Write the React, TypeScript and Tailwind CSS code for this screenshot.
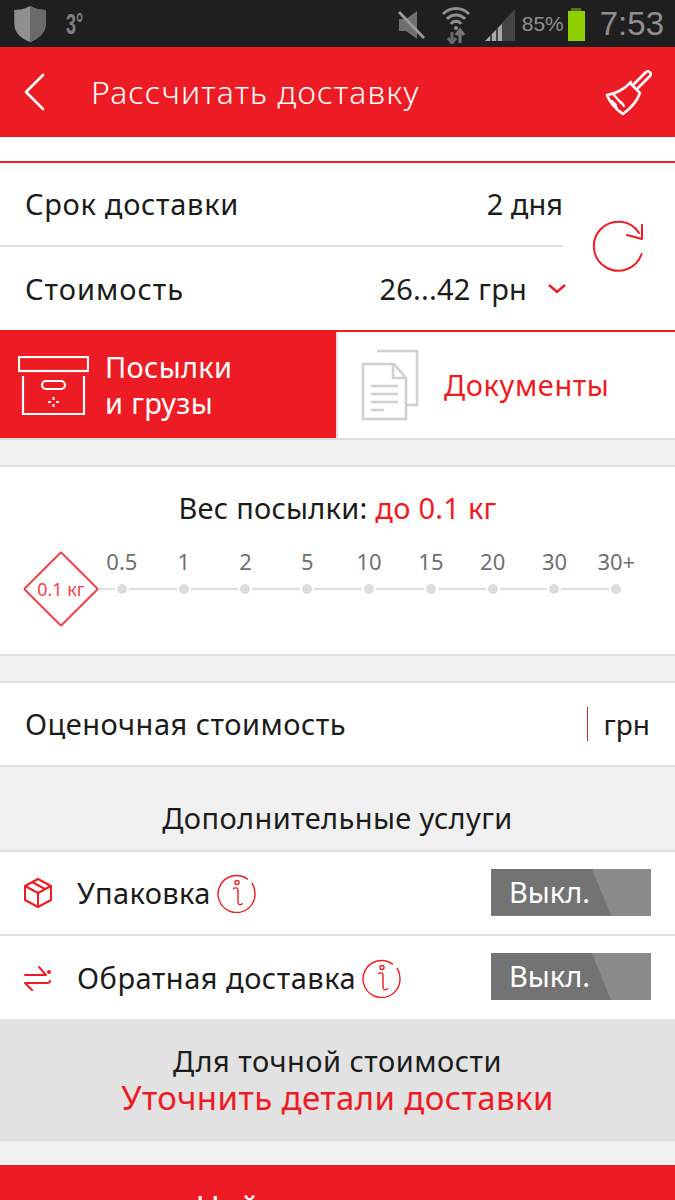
import React from "react";

const FONT = "font-['Noto_Sans','Open_Sans',sans-serif]";

function StatusBar() {
  return (
    <div className="flex h-[47px] shrink-0 items-center bg-[#1f1f1f] pl-[13px] pr-[11px] text-[#8a8a8a]">
      <svg width="34" height="38" viewBox="0 0 27 38" preserveAspectRatio="none" className="mt-[1px]">
        <path d="M13.5 1 C9 4 5 5 1 5 L1 19 C1 28 7 34 13.5 37 C20 34 26 28 26 19 L26 5 C22 5 18 4 13.5 1Z" fill="#8f8f8f" />
        <path d="M13.5 1 C18 4 22 5 26 5 L26 19 C26 28 20 34 13.5 37Z" fill="#6a6a6a" />
      </svg>
      <span className="ml-[19px] mt-[1px] origin-left font-['Liberation_Sans',sans-serif] text-[29px] leading-none font-bold text-[#808080] [transform:scaleX(0.62)]">3°</span>
      <div className="ml-auto flex items-center">
        <svg width="28" height="32" viewBox="0 0 28 32" className="mt-[2px]">
          <path d="M2 10h7l11-8v28l-11-8H2z" fill="#6f6f6f" />
          <path d="M2 3l25 26" stroke="#9a9a9a" strokeWidth="3" />
        </svg>
        <svg width="30" height="38" viewBox="0 0 30 38" className="ml-[16px] mt-[3px]">
          <path d="M2 8a18 18 0 0 1 26 0M6 13a12 12 0 0 1 18 0M10 18a6 6 0 0 1 10 0" fill="none" stroke="#8f8f8f" strokeWidth="3" />
          <circle cx="15" cy="22" r="2" fill="#8f8f8f" />
          <path d="M11 26v11M7 32l4 5 4-5" fill="none" stroke="#666" strokeWidth="3" />
          <path d="M19 37V25M15 29l4-5 4 5" fill="none" stroke="#777" strokeWidth="3" />
        </svg>
        <svg width="31" height="34" viewBox="0 0 31 34" className="ml-[14px] mt-[3px]">
          <path d="M0 33 L30 1 V33Z" fill="#444" />
          <path d="M0 33 L5 28 V33ZM7 33V26L11 22V33ZM13 33V20L17 16V33Z" fill="#a8a8a8" />
        </svg>
        <span className="ml-[6px] font-['Liberation_Sans',sans-serif] text-[21px] leading-none text-[#8f8f8f]">85%</span>
        <div className="ml-[4px] mt-[1px] flex flex-col items-center">
          <div className="h-[3px] w-[10px] bg-[#5a6a2a]" />
          <div className="h-[30px] w-[17px] bg-[#8fce00]" />
        </div>
        <span className="ml-[15px] font-['Liberation_Sans',sans-serif] text-[33px] leading-none text-[#8f8f8f]">7:53</span>
      </div>
    </div>
  );
}

function InfoIcon({ className }: { className?: string }) {
  return (
    <svg width="40" height="40" viewBox="0 0 40 40" fill="none" stroke="#ed1c24" strokeWidth="1.4" className={className}>
      <path d="M31 6.500A18.500 18.500 0 1 0 38 20a18.500 18.500 0 0 0-3-10" />
      <circle cx="20" cy="9.500" r="2" />
      <path d="M16 15.500c3-1 5-1 5 1.500v12c0 3 2 3.500 5 1.500" />
    </svg>
  );
}

function Toggle() {
  return (
    <div className="relative h-[47px] w-[160px] overflow-hidden bg-[#8a8a8a]">
      <div className="absolute inset-y-0 left-0 w-[120px] bg-[#737373] [clip-path:polygon(0_0,84%_0,100%_100%,0_100%)]" />
      <span className={`absolute left-[18px] top-[3px] ${FONT} text-[29px] leading-[40px] text-white`}>Выкл.</span>
    </div>
  );
}

const WEIGHTS = ["0.5", "1", "2", "5", "10", "15", "20", "30", "30+"];

export default function App() {
  return (
    <div className={`flex h-[1200px] flex-col overflow-hidden bg-[#f0f0f0] ${FONT} text-[#1c1c1c]`}>
      <StatusBar />

      <header className="flex h-[90px] shrink-0 items-center bg-[#ed1c24] pl-[23px] pr-[22px] text-white">
        <svg width="22" height="38" viewBox="0 0 22 38" fill="none" stroke="white" strokeWidth="2.6" strokeLinecap="round" strokeLinejoin="round">
          <path d="M20 2 3 19l17 17" />
        </svg>
        <h1 className="ml-[46px] text-[32px] font-light tracking-[1.15px]">Рассчитать доставку</h1>
        <svg width="48" height="48" viewBox="0 0 48 48" fill="none" stroke="white" strokeWidth="2.6" strokeLinejoin="round" strokeLinecap="round" className="ml-auto">
          <path d="M29 16 41 4c3-2 6 1 4 4L33 20" />
          <path d="M25 15 34 24" />
          <path d="M26 14C20 21 10 26 2 27c2 6 9 15 16 19 7-5 14-13 17-21" />
          <path d="M9 27l7 8M7 33l4 4M12 40l-3-3M19 38l-3-4" strokeWidth="2.2" />
        </svg>
      </header>

      <div className="h-[24px] shrink-0 bg-white" />

      <section className="relative shrink-0 border-t-2 border-[#ed1c24] bg-white">
        <div className="mr-[112px] flex h-[84px] items-center justify-between border-b-2 border-[#e0e0e0] pl-[25px] text-[29px]">
          <span className="tracking-[0.7px]">Срок доставки</span>
          <span>2 дня</span>
        </div>
        <div className="mr-[112px] flex h-[83px] items-center justify-between pl-[25px] text-[29px]">
          <span className="tracking-[1px]">Стоимость</span>
          <div className="flex items-center">
            <span className="tracking-[0.2px]">26...42 грн</span>
            <svg width="20" height="12" viewBox="0 0 20 12" fill="none" stroke="#ed1c24" strokeWidth="2.4" className="ml-[20px] mr-[-4px]">
              <path d="M2 2l8 7 8-7" />
            </svg>
          </div>
        </div>
        <svg width="54" height="54" viewBox="0 0 54 54" fill="none" stroke="#ed1c24" strokeWidth="2" strokeLinecap="round" strokeLinejoin="round" className="absolute left-[591px] top-[57px]">
          <path d="M50.600 34A24.500 24.500 0 1 1 48 13" />
          <path d="M51 5v14l-15-4" />
        </svg>
      </section>

      <section className="flex h-[110px] shrink-0 border-y-2 border-t-[#ed1c24] border-b-[#dcdcdc] bg-white">
        <div className="flex w-[336px] items-center bg-[#ed1c24] pl-[18px] text-white">
          <svg width="71" height="60" viewBox="0 0 71 60" fill="none" stroke="white" strokeWidth="2.2" className="mt-[2px]">
            <rect x="1" y="1" width="69" height="14" />
            <path d="M5 20v38h61V20" />
            <rect x="24" y="25" width="23" height="8" rx="4" />
            <path d="M35.500 41v3M35.500 48v3M30 46h3M38 46h3" strokeWidth="2" />
          </svg>
          <div className="ml-[16px] text-[29px] leading-[36px] tracking-[0.3px]">
            Посылки
            <br />
            и грузы
          </div>
        </div>
        <div className="flex flex-1 items-center border-l-2 border-[#dcdcdc] pl-[23px]">
          <svg width="58" height="72" viewBox="0 0 58 72" fill="none" stroke="#d0d0d0" strokeWidth="2.6">
            <path d="M16 2h40v54H46" />
            <path d="M2 15h31l12 14v41H2z" fill="white" />
            <path d="M32 15v14h13" />
            <path d="M10 37h27M10 45h27M10 53h27M10 61h13" />
          </svg>
          <span className="ml-[25px] text-[29px] tracking-[0.6px] text-[#ed1c24]">Документы</span>
        </div>
      </section>

      <div className="h-[25px] shrink-0" />

      <section className="h-[191px] shrink-0 border-y-2 border-[#e0e0e0] bg-white">
        <div className="mt-[21px] text-center text-[29px] leading-[40px] tracking-[0.25px]">
          Вес посылки: <span className="text-[#ed1c24]">до 0.1 кг</span>
        </div>
        <div className="mt-[17px] flex pl-[23px]">
          <div className="relative z-10 mt-[6px] flex h-[76px] w-[76px] shrink-0 items-center justify-center">
            <div className="absolute left-[11px] top-[11px] h-[54px] w-[54px] rotate-45 rounded-[2px] border-2 border-[#f0444c] bg-white" />
            <span className="relative text-[18px] text-[#f0444c]">0.1 кг</span>
          </div>
          <div className="ml-[-8px] flex flex-col">
            <div className="flex h-[32px]">
              {WEIGHTS.map((w) => (
                <span key={w} className="w-[61.8px] text-center text-[22px] leading-[32px] text-[#707070]">
                  {w}
                </span>
              ))}
            </div>
            <div className="relative mt-[7px] flex h-[10px] items-center">
              <div className="absolute left-0 right-[30px] top-[4px] h-[2px] bg-[#dedede]" />
              {WEIGHTS.map((w) => (
                <div key={w} className="relative flex w-[61.8px] justify-center">
                  <span className="h-[10px] w-[10px] rounded-full bg-[#dcdcdc] ring-2 ring-white" />
                </div>
              ))}
            </div>
          </div>
        </div>
      </section>

      <div className="h-[25px] shrink-0" />

      <section className="flex h-[86px] shrink-0 items-center border-y-2 border-[#e0e0e0] bg-white pl-[25px] pr-[25px] text-[29px]">
        <span className="tracking-[0.5px]">Оценочная стоимость</span>
        <span className="ml-auto h-[34px] w-px bg-[#c8323a]" />
        <span className="ml-[16px] text-[28px]">грн</span>
      </section>

      <div className="flex h-[83px] shrink-0 items-center justify-center pt-[18px] text-[29px] tracking-[0.4px]">Дополнительные услуги</div>

      <section className="shrink-0 border-t-2 border-[#e0e0e0] bg-white">
        <div className="flex h-[84px] items-center border-b-2 border-[#e0e0e0] pl-[23px] pr-[24px]">
          <svg width="30" height="32" viewBox="0 0 30 32" fill="none" stroke="#ed1c24" strokeWidth="2" strokeLinejoin="round">
            <path d="M15 2 28 9v14l-13 7-13-7V9z" />
            <path d="M2 9l13 7 13-7M15 16v14M9 5l13 7" />
          </svg>
          <span className="ml-[24px] text-[29px] tracking-[0.4px]">Упаковка</span>
          <InfoIcon className="ml-[6px]" />
          <div className="mb-[2px] ml-auto">
            <Toggle />
          </div>
        </div>
        <div className="flex h-[83px] items-center pl-[23px] pr-[24px]">
          <svg width="30" height="26" viewBox="0 0 30 26" fill="none" stroke="#ed1c24" strokeWidth="2" strokeLinecap="round" strokeLinejoin="round">
            <path d="M2 10h20M16 2l7 8" />
            <path d="M27 16c0 1-1 2-3 2H3M9 25l-7-7" />
            <circle cx="26" cy="7" r="2" fill="#ed1c24" stroke="none" />
          </svg>
          <span className="ml-[24px] text-[29px] tracking-[0.5px]">Обратная доставка</span>
          <InfoIcon className="ml-[6px]" />
          <div className="mb-[2px] ml-auto">
            <Toggle />
          </div>
        </div>
      </section>

      <section className="flex h-[122px] shrink-0 flex-col items-center border-b-2 border-[#dadada] bg-[#e2e2e2] pt-[23px]">
        <span className="text-[29px] leading-[38px] tracking-[0.5px]">Для точной стоимости</span>
        <span className="text-[33px] leading-[36px] tracking-[0.4px] text-[#ed1c24]">Уточнить детали доставки</span>
      </section>

      <div className="h-[24px] shrink-0" />

      <div className="flex flex-1 justify-center bg-[#ed1c24] pt-[21px] text-[33px] leading-[44px] tracking-[0.5px] text-white">Найти отделения</div>
    </div>
  );
}
